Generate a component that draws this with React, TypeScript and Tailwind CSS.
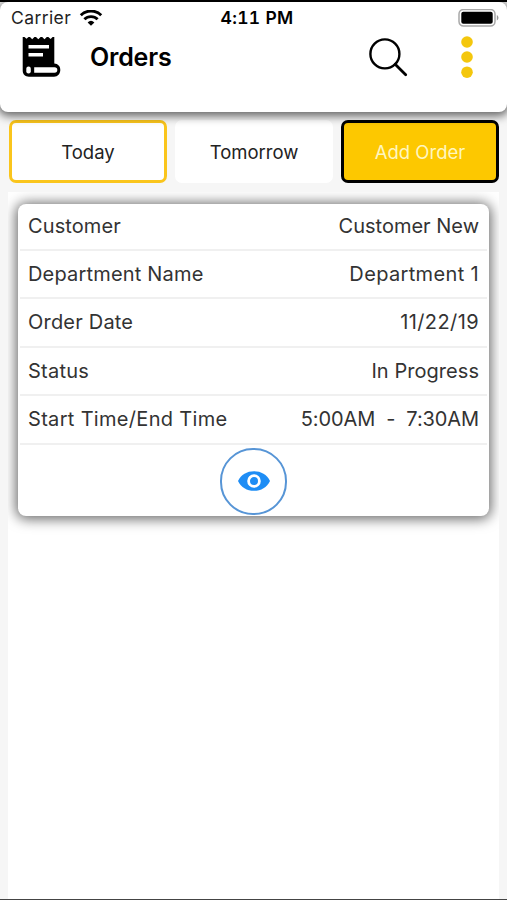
import clsx from "clsx";

const rows = [
  { label: "Customer", value: "Customer New", labelClass: "tracking-[0.1px]", valueClass: "" },
  {
    label: "Department Name",
    value: "Department 1",
    labelClass: "tracking-[0.18px]",
    valueClass: "tracking-[0.35px]",
  },
  { label: "Order Date", value: "11/22/19", labelClass: "tracking-[0.2px]", valueClass: "tracking-[0.4px]" },
  { label: "Status", value: "In Progress", labelClass: "tracking-[0.25px]", valueClass: "tracking-[0.05px]" },
  {
    label: "Start Time/End Time",
    value: "5:00AM  -  7:30AM",
    labelClass: "tracking-[0.32px]",
    valueClass: "tracking-[-0.1px]",
  },
];

const tabs = [
  { label: "Today", className: "border-[#fac51c] bg-white text-[#222]" },
  { label: "Tomorrow", className: "border-white bg-white text-[#222]" },
  { label: "Add Order", className: "border-black bg-[#fdc800] text-[#fff6c0]" },
];

const WifiIcon = () => (
  <svg width="24" height="17" viewBox="0 0 24 17" fill="none" stroke="#000" strokeWidth="2.9">
    <path d="M1.8 5.2a14.6 14.6 0 0 1 20.4 0" />
    <path d="M5.4 9.3a9.4 9.4 0 0 1 13.2 0" />
    <path d="M8.6 12.4a5 5 0 0 1 6.8 0L12 15.8Z" fill="#000" stroke="none" />
  </svg>
);

const BatteryIcon = () => (
  <svg width="41" height="19" viewBox="0 0 41 19" fill="none">
    <rect x="1" y=".5" width="36" height="16.5" rx="4.5" stroke="#a8a8a8" strokeWidth="1.5" />
    <rect x="3.3" y="2.8" width="31.4" height="11.9" rx="2" fill="#000" />
    <path d="M38.8 6c2.2 1 2.2 4.5 0 5.5Z" fill="#999" />
  </svg>
);

const ReceiptIcon = () => (
  <svg width="39" height="42" viewBox="0 0 39 42" fill="none">
    <path
      d="M.7 1H2.5L4.5 2.8 6.5 1H8L10.2 3.2 12.4 1H14L16.3 3.2 18.6 1H20.2L22.5 3.2 24.8 1H26.3L28.6 3 30.6 1H32.3V27.6C36 27.8 38.3 30.3 38.3 34S35.8 40.7 32 40.7H7C3.2 40.7.7 38.4.7 34.5Z"
      fill="#000"
    />
    <path d="M6.5 9H27v3.4H6.5ZM6.5 17H21v3.4H6.5Z" fill="#fff" />
    <rect x="4.3" y="30.5" width="4.5" height="7" rx="2.2" fill="#fff" />
    <path d="M12.2 31.2H32.5a2.8 2.8 0 0 1 0 5.6H12.2Z" fill="#fff" />
  </svg>
);

const SearchIcon = () => (
  <svg width="39" height="39" viewBox="0 0 39 39" fill="none" stroke="#000">
    <circle cx="15.9" cy="15.9" r="14.5" strokeWidth="2.4" />
    <path d="m26.2 26.2 10.5 10.5" strokeWidth="2.8" strokeLinecap="round" />
  </svg>
);

const DotsIcon = () => (
  <svg width="12" height="43" viewBox="0 0 12 43" fill="#f4c70d">
    <circle cx="6" cy="6" r="5.8" />
    <circle cx="6" cy="21" r="5.8" />
    <circle cx="6" cy="36.2" r="5.8" />
  </svg>
);

const EyeIcon = () => (
  <svg width="32" height="20" viewBox="0 0 32 20">
    <path d="M0 10C3 3.5 9 .2 16 .2S29 3.5 32 10C29 16.5 23 19.8 16 19.8S3 16.5 0 10Z" fill="#1e8df5" />
    <circle cx="16" cy="10" r="5.4" fill="none" stroke="#fff" strokeWidth="2.8" />
  </svg>
);

const Header = () => (
  <header className="relative z-10 h-[110px] rounded-[8px] bg-white shadow-[0_2px_10px_2px_rgba(0,0,0,0.6)]">
    <div className="grid h-8 grid-cols-3 items-center pl-[11px] pr-[8px] text-[17.5px] text-black">
      <div className="flex items-center gap-[8px]">
        <span className="tracking-[0.4px] text-[#222]">Carrier</span>
        <WifiIcon />
      </div>
      <span className="whitespace-nowrap pl-[4px] text-center font-semibold tabular-nums tracking-[0.3px]">
        4:11 PM
      </span>
      <div className="flex justify-end">
        <BatteryIcon />
      </div>
    </div>
    <div className="flex items-start pl-[22px] pr-[34px]">
      <div className="pt-[2px]">
        <ReceiptIcon />
      </div>
      <h1 className="ml-[29px] pt-[5px] text-[25px] font-semibold leading-[36px] tracking-[-0.2px] text-black">
        Orders
      </h1>
      <button type="button" aria-label="Search" className="ml-auto pt-[4px]">
        <SearchIcon />
      </button>
      <button type="button" aria-label="Menu" className="ml-[53px] pt-[2px]">
        <DotsIcon />
      </button>
    </div>
  </header>
);

const OrderCard = () => (
  <article className="h-[312px] rounded-[8px] bg-white px-[2px] shadow-[0_1px_13px_2px_rgba(0,0,0,0.6)]">
    {rows.map((row) => (
      <div
        key={row.label}
        className="flex h-[48.5px] items-center justify-between border-b-2 border-[#f0f0f0] px-[8px] text-[20px] text-[#333] first:h-[46.5px] first:pb-px"
      >
        <span className={row.labelClass}>{row.label}</span>
        <span className={clsx("whitespace-pre", row.valueClass)}>{row.value}</span>
      </div>
    ))}
    <div className="flex justify-center pt-[3.5px]">
      <button
        type="button"
        aria-label="View order"
        className="flex size-[67px] items-center justify-center rounded-[33px] border-2 border-[#5795d6] pb-px"
      >
        <EyeIcon />
      </button>
    </div>
  </article>
);

export default function App() {
  return (
    <div className="flex h-[900px] w-[507px] flex-col overflow-hidden border-b border-[#444] border-t-2 border-t-black bg-[#f6f6f6] font-['Inter','Liberation_Sans',sans-serif]">
      <Header />
      <nav className="grid grid-cols-3 gap-[8px] pl-[9px] pr-[8px] pt-[8px]">
        {tabs.map((tab) => (
          <button
            key={tab.label}
            type="button"
            className={clsx("h-[63px] rounded-[7px] border-[3px] pt-[2px] text-[18.5px]", tab.className)}
          >
            {tab.label}
          </button>
        ))}
      </nav>
      <main className="mx-[8px] mt-[9px] flex-1 overflow-hidden bg-white px-[10px] pt-[12px]">
        <OrderCard />
      </main>
    </div>
  );
}
